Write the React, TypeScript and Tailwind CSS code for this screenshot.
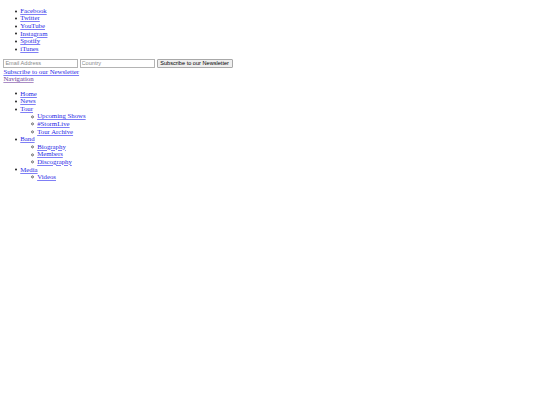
import React from "react";

const link = "text-[#2a2ae6] underline decoration-[0.5px] decoration-[rgba(0,0,238,0.5)] underline-offset-[0.5px]";
const visited = "text-[#6a3a98] underline decoration-[0.5px] decoration-[rgba(85,26,139,0.5)] underline-offset-[0.5px]";

function Disc({ children }: { children: React.ReactNode }) {
  return (
    <div className="flex items-center h-[7.6px]">
      <span className="-ml-[5.5px] mr-[3.5px] w-[2px] h-[2px] rounded-full bg-[#222] translate-y-[0.4px] shrink-0" />
      {children}
    </div>
  );
}

function Circle({ children }: { children: React.ReactNode }) {
  return (
    <div className="flex items-center h-[7.6px]">
      <span className="-ml-[6px] mr-[3px] w-[3px] h-[3px] rounded-full border-[0.7px] border-[#666] translate-y-[0.4px] shrink-0" />
      {children}
    </div>
  );
}

const inputCls =
  "h-[8.8px] px-[1px] py-0 border border-[#b4b4b4] bg-white font-['Liberation_Sans',sans-serif] text-[5.6px] leading-[6px] text-black placeholder:text-[#8a8a8a] outline-none";

export default function App() {
  return (
    <div className="bg-white min-h-screen">
      <div className="px-[3.375px] font-['Liberation_Serif',serif] text-[6.8px] leading-[7.6px] text-black">
        <ul className="list-none pl-[16.875px] pt-[6.75px] mb-[6.75px]">
          {["Facebook", "Twitter", "YouTube", "Instagram", "Spotify", "iTunes"].map((t) => (
            <li key={t}>
              <Disc>
                <a href="#" className={link}>{t}</a>
              </Disc>
            </li>
          ))}
        </ul>
        <form className="flex items-start gap-[1.5px] h-[8.6px]" onSubmit={(e) => e.preventDefault()}>
          <input placeholder="Email Address" className={`${inputCls} w-[74.7px]`} />
          <input placeholder="Country" className={`${inputCls} w-[75.5px]`} />
          <button
            type="submit"
            className="h-[8.8px] w-[76px] p-0 border border-[#a8a8a8] rounded-[1px] bg-[#efefef] font-['Liberation_Sans',sans-serif] text-[5.6px] leading-[6px] text-black text-center"
          >
            Subscribe to our Newsletter
          </button>
        </form>
        <div className="h-[7.6px]">
          <a href="#" className={link}>Subscribe to our Newsletter</a>
        </div>
        <div className="h-[7.6px]">
          <a href="#" className={visited}>Navigation</a>
        </div>
        <ul className="list-none pl-[16.875px] my-[6.75px]">
          <li><Disc><a href="#" className={link}>Home</a></Disc></li>
          <li><Disc><a href="#" className={link}>News</a></Disc></li>
          <li>
            <Disc><a href="#" className={link}>Tour</a></Disc>
            <ul className="list-none pl-[16.875px]">
              <li><Circle><a href="#" className={link}>Upcoming Shows</a></Circle></li>
              <li><Circle><a href="#" className={link}>#StormLive</a></Circle></li>
              <li><Circle><a href="#" className={link}>Tour Archive</a></Circle></li>
            </ul>
          </li>
          <li>
            <Disc><a href="#" className={link}>Band</a></Disc>
            <ul className="list-none pl-[16.875px]">
              <li><Circle><a href="#" className={link}>Biography</a></Circle></li>
              <li><Circle><a href="#" className={link}>Members</a></Circle></li>
              <li><Circle><a href="#" className={link}>Discography</a></Circle></li>
            </ul>
          </li>
          <li>
            <Disc><a href="#" className={link}>Media</a></Disc>
            <ul className="list-none pl-[16.875px]">
              <li><Circle><a href="#" className={link}>Videos</a></Circle></li>
            </ul>
          </li>
        </ul>
      </div>
    </div>
  );
}
